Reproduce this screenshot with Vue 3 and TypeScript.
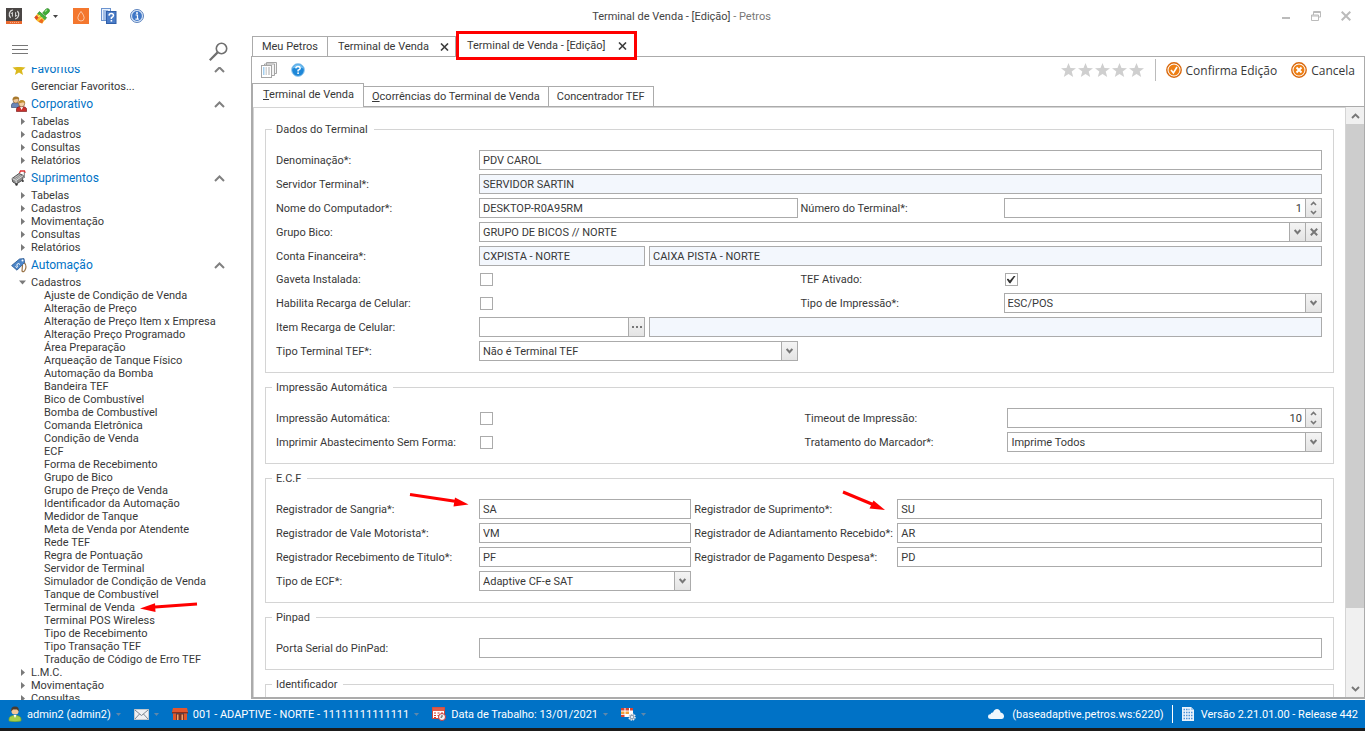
<script setup lang="ts">
import { reactive, ref } from 'vue'

interface TreeNode {
  label: string
  open?: boolean
  children?: string[]
}
interface TreeSection {
  title: string
  icon: 'star' | 'people' | 'cart' | 'tag'
  nodes: TreeNode[]
}

const sections: TreeSection[] = [
  { title: 'Favoritos', icon: 'star', nodes: [] },
  {
    title: 'Corporativo',
    icon: 'people',
    nodes: [{ label: 'Tabelas' }, { label: 'Cadastros' }, { label: 'Consultas' }, { label: 'Relatórios' }],
  },
  {
    title: 'Suprimentos',
    icon: 'cart',
    nodes: [
      { label: 'Tabelas' },
      { label: 'Cadastros' },
      { label: 'Movimentação' },
      { label: 'Consultas' },
      { label: 'Relatórios' },
    ],
  },
  {
    title: 'Automação',
    icon: 'tag',
    nodes: [
      {
        label: 'Cadastros',
        open: true,
        children: [
          'Ajuste de Condição de Venda',
          'Alteração de Preço',
          'Alteração de Preço Item x Empresa',
          'Alteração Preço Programado',
          'Área Preparação',
          'Arqueação de Tanque Físico',
          'Automação da Bomba',
          'Bandeira TEF',
          'Bico de Combustível',
          'Bomba de Combustível',
          'Comanda Eletrônica',
          'Condição de Venda',
          'ECF',
          'Forma de Recebimento',
          'Grupo de Bico',
          'Grupo de Preço de Venda',
          'Identificador da Automação',
          'Medidor de Tanque',
          'Meta de Venda por Atendente',
          'Rede TEF',
          'Regra de Pontuação',
          'Servidor de Terminal',
          'Simulador de Condição de Venda',
          'Tanque de Combustível',
          'Terminal de Venda',
          'Terminal POS Wireless',
          'Tipo de Recebimento',
          'Tipo Transação TEF',
          'Tradução de Código de Erro TEF',
        ],
      },
      { label: 'L.M.C.' },
      { label: 'Movimentação' },
      { label: 'Consultas' },
    ],
  },
]

const current = ref('Terminal de Venda')

const form = reactive({
  denominacao: 'PDV CAROL',
  servidor: 'SERVIDOR SARTIN',
  computador: 'DESKTOP-R0A95RM',
  numero: 1,
  grupoBico: 'GRUPO DE BICOS // NORTE',
  contaCodigo: 'CXPISTA - NORTE',
  contaNome: 'CAIXA PISTA - NORTE',
  gaveta: false,
  tef: true,
  recarga: false,
  tipoImpressao: 'ESC/POS',
  itemCodigo: '',
  itemNome: '',
  tipoTef: 'Não é Terminal TEF',
  impressaoAuto: false,
  timeout: 10,
  semForma: false,
  marcador: 'Imprime Todos',
  sangria: 'SA',
  suprimento: 'SU',
  vale: 'VM',
  adiantamento: 'AR',
  titulo: 'PF',
  despesa: 'PD',
  tipoEcf: 'Adaptive CF-e SAT',
  porta: '',
})
</script>

<template>
  <div class="app">
    <header class="titlebar">
      <div class="quick">
        <svg class="logo" width="16" height="16" viewBox="0 0 16 16">
          <rect width="16" height="16" fill="#4a4645" />
          <path d="M6.8 1.8A4.8 4.8 0 0 0 4.6 9.8M9.2 11A4.8 4.8 0 0 0 11.4 3" fill="none" stroke="#dcdcdc" stroke-width="1.2" />
          <path d="M6.4 8.6V4.4L4.8 6M9.6 4.2v4.4L11.2 7" stroke="#dcdcdc" stroke-width="1" fill="none" />
          <rect y="13" width="16" height="3" fill="#e8692f" />
          <path d="M4 14.5h9" stroke="#f8b08c" stroke-dasharray="1 1" />
        </svg>
        <button class="brush" aria-label="Aparência">
          <svg width="16" height="16" viewBox="0 0 16 16">
            <path d="M8.6 5 11.8 1.2Q13.4-.2 15 1.2T14.8 4.4L11.2 7.6z" fill="#3fae35" stroke="#2b7d26" stroke-width=".6" />
            <path d="M11 3.6 13 1.6" stroke="#a5e39a" stroke-width="1.2" />
            <path d="M5.4 3.6 12.6 9.6 10.8 12 3.6 5.8z" fill="#46b53a" stroke="#2b7d26" stroke-width=".6" />
            <path d="M3.4 5.8 10.8 12 8.2 15.4Q3.4 14.6.4 9.4z" fill="#f7bd2e" />
            <path d="M.4 9.4 2.2 7.2 4.6 9.4 2.6 12z" fill="#dd4a2a" />
            <path d="M4.6 13.8 7.4 10.6 9.4 12.4 8.2 15.4z" fill="#ee6a20" />
            <path d="M4 8.6 6.2 7.4M6 11.4l2-2" stroke="#fff2a0" />
          </svg>
          <svg width="5" height="3" viewBox="0 0 5 3"><path d="M0 0h5L2.5 3z" fill="#444" /></svg>
        </button>
        <svg class="drop" width="16" height="16" viewBox="0 0 16 16">
          <rect width="16" height="16" fill="#f4772e" />
          <path d="M8 3.4Q4.8 7.6 4.8 9.8a3.2 3.2 0 0 0 6.4 0Q11.2 7.6 8 3.4z" fill="none" stroke="#fbc7a6" stroke-width="1" />
        </svg>
        <svg class="docs" width="16" height="16" viewBox="0 0 16 16">
          <rect x=".5" y=".5" width="9" height="12" fill="#e8f1fc" stroke="#6b93cf" />
          <path d="M2 3h5M2 5h3M2 7h3M2 9h3M2 11h3" stroke="#5d8ad0" />
          <rect x="5.5" y="3.5" width="9.5" height="12" fill="#4a7cc8" stroke="#2f5ea8" />
          <path d="M8 7.6Q8.2 5.6 10.3 5.6T12.5 7.5Q12.5 8.7 10.4 9.7V11" fill="none" stroke="#fff" stroke-width="1.5" />
          <rect x="9.6" y="12" width="1.6" height="1.6" fill="#fff" />
        </svg>
        <svg width="14" height="14" viewBox="0 0 14 14">
          <circle cx="7" cy="7" r="6.5" fill="#dbe8f8" stroke="#5c82bd" />
          <circle cx="7" cy="7" r="4.9" fill="#3f76c6" />
          <path d="M5.6 6h1.9v4M5.4 10.2h3.4" stroke="#fff" fill="none" stroke-width="1.2" />
          <circle cx="7" cy="3.9" r="1" fill="#fff" />
        </svg>
      </div>
      <h1 class="caption">Terminal de Venda - [Edição] <span>- Petros</span></h1>
      <div class="window-buttons">
        <button aria-label="Minimizar"><svg width="10" height="10" viewBox="0 0 10 10"><path d="M1 7h8" stroke="#bbb" stroke-width="2" /></svg></button>
        <button aria-label="Restaurar"><svg width="10" height="10" viewBox="0 0 10 10"><path d="M2.5 4V.5h7V6H8M2 1.5h7.5M.5 4h7v5.5h-7zM.5 5h7" fill="none" stroke="#bbb" /></svg></button>
        <button aria-label="Fechar"><svg width="10" height="10" viewBox="0 0 10 10"><path d="M.7.7l8.6 8.6M9.3.7.7 9.3" stroke="#bbb" stroke-width="2" /></svg></button>
      </div>
    </header>

    <div class="main">
      <aside class="sidebar">
        <div class="side-tools">
          <button class="menu" aria-label="Menu"><svg width="16" height="9" viewBox="0 0 16 9"><path d="M0 .5h16M0 4.5h16M0 8.5h16" stroke="#777" /></svg></button>
          <button aria-label="Pesquisar">
            <svg width="19" height="19" viewBox="0 0 19 19"><circle cx="12.5" cy="6.5" r="5.2" fill="none" stroke="#6f6f6f" stroke-width="1.6" /><path d="M8.6 10.4.8 18.2" stroke="#6f6f6f" stroke-width="2.2" /></svg>
          </button>
        </div>
        <nav class="tree">
          <div class="tree-body">
            <section v-for="s in sections" :key="s.title">
              <h2>
                <span class="sec-icon">
                  <svg v-if="s.icon === 'star'" width="14" height="14" viewBox="0 0 14 14"><path d="M7 .5 8.8 5.1 13.5 5.4 9.9 8.4 11.1 13 7 10.4 2.9 13 4.1 8.4.5 5.4 5.2 5.1z" fill="#dbb91e" /></svg>
                  <svg v-else-if="s.icon === 'people'" width="16" height="16" viewBox="0 0 16 16">
                    <path d="M.5 11.500V9Q.5 6.500 4.500 6.500T9 9v2.500z" fill="#6b87b8" stroke="#3c4f78" stroke-width=".7" />
                    <circle cx="4.800" cy="4.200" r="2.800" fill="#f0c79a" stroke="#7a5326" stroke-width=".6" />
                    <path d="M1.600 4Q1.300.5 4.900.5T8.200 3.800L6.500 2.800z" fill="#a8792c" />
                    <path d="M5.500 15.600V13.200Q5.700 10.500 10.500 10.500T15.600 13.200v2.400z" fill="#c9302c" stroke="#7d1a1a" stroke-width=".7" />
                    <path d="M9 10.700l1.600 3.300 1.600-3.300z" fill="#fff" />
                    <circle cx="10.700" cy="7.800" r="3" fill="#f3cda4" stroke="#7a5326" stroke-width=".6" />
                    <path d="M7.300 7.600Q7.200 4 10.800 4T14.200 7.500L12.400 6.200z" fill="#bf8c30" />
                  </svg>
                  <svg v-else-if="s.icon === 'cart'" width="16" height="16" viewBox="0 0 16 16">
                    <path d="M1 8.500 8 3.500 12.500 5.500 11.500 10 5.500 14 1.800 12z" fill="#8d8d8d" stroke="#555" />
                    <path d="M1.500 8.700 5 10.500 12.300 5.600M5 10.500l.5 3" stroke="#d8d8d8" fill="none" />
                    <path d="M3.500 7.800l5-3.300M4 9.500l6-4" stroke="#bcbcbc" />
                    <path d="M8.500 3 9.500 1h4l.6 2" fill="none" stroke="#d33" stroke-width="1.300" />
                    <path d="M13.300 2v6" stroke="#777" />
                    <circle cx="5.500" cy="14.500" r="1.200" fill="#333" /><circle cx="11.800" cy="11" r="1.100" fill="#333" />
                  </svg>
                  <svg v-else width="16" height="16" viewBox="0 0 16 16">
                    <path d="M12.500 5Q16 8 14.500 12T11 14L11.500 8" fill="none" stroke="#9a7448" stroke-width="1.200" />
                    <path d="M.6 8.600 8.500 2 13 1.600 13.600 5.500 6 13.200z" fill="#4c86c8" stroke="#28568f" stroke-width=".8" />
                    <circle cx="11.500" cy="3.600" r="1" fill="#fff" />
                    <path d="M4.500 9.500l1.500 1Q7 9.500 6 8.500T7.500 6.500l1.500 1" fill="none" stroke="#fff" />
                  </svg>
                </span>
                <button class="sec-title">
                  {{ s.title }}
                  <svg width="11" height="7" viewBox="0 0 11 7"><path d="M1 6 5.5 1.5 10 6" fill="none" stroke="#808080" stroke-width="2" /></svg>
                </button>
              </h2>
              <ul>
                <li v-if="s.icon === 'star'"><a class="node" href="#">Gerenciar Favoritos...</a></li>
                <li v-for="n in s.nodes" :key="n.label">
                  <a class="node" href="#">
                    <svg v-if="n.open" class="twist" width="8" height="7" viewBox="0 0 8 7"><path d="M0 1.5h7L3.5 5.5z" fill="#7a7a7a" /></svg>
                    <svg v-else class="twist" width="8" height="7" viewBox="0 0 8 7"><path d="M2 0v7L6 3.5z" fill="#7a7a7a" /></svg>
                    {{ n.label }}
                  </a>
                  <ul v-if="n.children">
                    <li v-for="c in n.children" :key="c">
                      <a class="leaf" href="#">{{ c }}
                        <svg v-if="c === current" class="arrow" width="58" height="12" viewBox="0 0 58 12"><path d="M57 2 15 4.9" stroke="#f00" stroke-width="3" /><path d="M0 6.5 15 1.2 15.5 10z" fill="#f00" /></svg>
                      </a>
                    </li>
                  </ul>
                </li>
              </ul>
            </section>
          </div>
        </nav>
      </aside>

      <main class="workspace">
        <div class="doc-tabs">
          <div class="doc-tab"><button>Meu Petros</button></div>
          <div class="doc-tab closable">
            <button>Terminal de Venda</button>
            <button aria-label="Fechar aba"><svg width="9" height="8" viewBox="0 0 9 8"><path d="M1 .5 8 7.5M8 .5 1 7.5" stroke="#3c3c3c" stroke-width="1.6" /></svg></button>
          </div>
          <div class="doc-tab closable active">
            <button>Terminal de Venda - [Edição]</button>
            <button aria-label="Fechar aba"><svg width="9" height="8" viewBox="0 0 9 8"><path d="M1 .5 8 7.5M8 .5 1 7.5" stroke="#3c3c3c" stroke-width="1.6" /></svg></button>
          </div>
        </div>

        <div class="document">
          <div class="toolbar">
            <button aria-label="Registros">
              <svg width="16" height="16" viewBox="0 0 16 16">
                <path d="M5.500 3V.5h10v11H13M3.500 4.500V2h10v11.500H11" fill="#f4f4f4" stroke="#a5a5a5" />
                <rect x=".5" y="3.500" width="10" height="12" fill="#fff" stroke="#a5a5a5" />
                <path d="M2 6h1.500M2 8h1.500M2 10h1.500M2 12h1.500" stroke="#4aa0e0" />
                <path d="M4.500 6H6M4.500 8H6M4.500 10H6M4.500 12H6M7 6h2M7 8h2M7 10h2M7 12h2" stroke="#a8a8a8" />
              </svg>
            </button>
            <button aria-label="Ajuda">
              <svg width="14" height="14" viewBox="0 0 14 14">
                <circle cx="7" cy="7" r="6.4" fill="#1d87d8" stroke="#9cccf0" />
                <path d="M1.5 5.500Q3 1.300 7 1.300T12.500 5.500Q7 3.500 1.500 5.500z" fill="#6fbdf0" />
                <path d="M4.800 5.400Q5 3.500 7 3.500T9.200 5.200Q9.200 6.300 7.100 7.200V8.400" fill="none" stroke="#fff" stroke-width="1.5" />
                <rect x="6.300" y="9.400" width="1.600" height="1.600" fill="#fff" />
              </svg>
            </button>
            <div class="rating">
              <svg v-for="i in 5" :key="i" width="15" height="14" viewBox="0 0 15 14"><path d="M7.5 0 9.5 5 15 5.2 10.7 8.5 12.2 14 7.5 10.9 2.8 14 4.3 8.5 0 5.2 5.5 5z" fill="#cfcfcf" /></svg>
            </div>
            <button class="command">
              <svg width="16" height="16" viewBox="0 0 16 16"><circle cx="8" cy="8" r="7.2" fill="#fff" stroke="#d9690e" stroke-width="1.4" /><circle cx="8" cy="8" r="5.5" fill="#ee7f14" /><path d="M5 8l2.4 2.8L11 5" fill="none" stroke="#fff" stroke-width="1.6" /></svg>
              Confirma Edição
            </button>
            <button class="command">
              <svg width="16" height="16" viewBox="0 0 16 16"><circle cx="8" cy="8" r="7.2" fill="#fff" stroke="#d9690e" stroke-width="1.4" /><circle cx="8" cy="8" r="5.5" fill="#ee7f14" /><path d="M5.500 5.500l5 5M10.500 5.500l-5 5" stroke="#fff" stroke-width="2" /></svg>
              Cancela
            </button>
          </div>

          <div class="page-tabs">
            <button class="page-tab active"><u>T</u>erminal de Venda</button>
            <button class="page-tab"><u>O</u>corrências do Terminal de Venda</button>
            <button class="page-tab">Concentrador TEF</button>
          </div>

          <div class="page">
            <form class="groups" @submit.prevent>
              <fieldset>
                <legend>Dados do Terminal</legend>
                <div class="grid halves">
                  <label for="den">Denominação*:</label>
                  <input id="den" v-model="form.denominacao" class="box wide" />
                  <label for="srv">Servidor Terminal*:</label>
                  <input id="srv" v-model="form.servidor" class="box wide" readonly />
                  <label for="cmp">Nome do Computador*:</label>
                  <input id="cmp" v-model="form.computador" class="box" />
                  <label for="num" class="second">Número do Terminal*:</label>
                  <div class="combo">
                    <input id="num" v-model="form.numero" type="number" />
                    <span class="spin">
                      <button type="button" aria-label="Aumentar"><svg width="7" height="5" viewBox="0 0 7 5"><path d="M1 4 3.5 1.5 6 4" fill="none" stroke="#777" stroke-width="1.6" /></svg></button>
                      <button type="button" aria-label="Diminuir"><svg width="7" height="5" viewBox="0 0 7 5"><path d="M1 1l2.5 2.5L6 1" fill="none" stroke="#777" stroke-width="1.6" /></svg></button>
                    </span>
                  </div>
                  <label for="gru">Grupo Bico:</label>
                  <div class="combo wide">
                    <select id="gru" v-model="form.grupoBico"><option>GRUPO DE BICOS // NORTE</option></select>
                    <button type="button" class="drop-btn" aria-label="Abrir"><svg width="7" height="6" viewBox="0 0 7 6"><path d="M.7 1 3.5 4.2 6.3 1" fill="none" stroke="#777" stroke-width="1.9" /></svg></button>
                    <button type="button" class="drop-btn" aria-label="Limpar"><svg width="8" height="8" viewBox="0 0 8 8"><path d="M.8.8l6.4 6.4M7.2.8.8 7.2" stroke="#777" stroke-width="2" /></svg></button>
                  </div>
                  <label for="con">Conta Financeira*:</label>
                  <div class="pair wide">
                    <input id="con" v-model="form.contaCodigo" class="box" readonly />
                    <input v-model="form.contaNome" class="box" aria-label="Nome da conta" readonly />
                  </div>
                  <label for="gav" class="low">Gaveta Instalada:</label>
                  <input id="gav" v-model="form.gaveta" type="checkbox" />
                  <label for="tef" class="second low">TEF Ativado:</label>
                  <input id="tef" v-model="form.tef" type="checkbox" />
                  <label for="rec">Habilita Recarga de Celular:</label>
                  <input id="rec" v-model="form.recarga" type="checkbox" />
                  <label for="imp" class="second">Tipo de Impressão*:</label>
                  <div class="combo">
                    <select id="imp" v-model="form.tipoImpressao"><option>ESC/POS</option></select>
                    <button type="button" class="drop-btn" aria-label="Abrir"><svg width="7" height="6" viewBox="0 0 7 6"><path d="M.7 1 3.5 4.2 6.3 1" fill="none" stroke="#777" stroke-width="1.9" /></svg></button>
                  </div>
                  <label for="ite">Item Recarga de Celular:</label>
                  <div class="pair wide">
                    <div class="combo">
                      <input id="ite" v-model="form.itemCodigo" type="text" />
                      <button type="button" class="drop-btn" aria-label="Procurar"><svg width="10" height="2" viewBox="0 0 10 2"><path d="M0 0h2v2H0zM4 0h2v2H4zM8 0h2v2H8z" fill="#777" /></svg></button>
                    </div>
                    <input v-model="form.itemNome" class="box" aria-label="Nome do item" readonly />
                  </div>
                  <label for="tte">Tipo Terminal TEF*:</label>
                  <div class="combo">
                    <select id="tte" v-model="form.tipoTef"><option>Não é Terminal TEF</option></select>
                    <button type="button" class="drop-btn" aria-label="Abrir"><svg width="7" height="6" viewBox="0 0 7 6"><path d="M.7 1 3.5 4.2 6.3 1" fill="none" stroke="#777" stroke-width="1.9" /></svg></button>
                  </div>
                </div>
              </fieldset>

              <fieldset>
                <legend>Impressão Automática</legend>
                <div class="grid print">
                  <label for="aut">Impressão Automática:</label>
                  <input id="aut" v-model="form.impressaoAuto" type="checkbox" />
                  <label for="tim" class="second">Timeout de Impressão:</label>
                  <div class="combo">
                    <input id="tim" v-model="form.timeout" type="number" />
                    <span class="spin">
                      <button type="button" aria-label="Aumentar"><svg width="7" height="5" viewBox="0 0 7 5"><path d="M1 4 3.5 1.5 6 4" fill="none" stroke="#777" stroke-width="1.6" /></svg></button>
                      <button type="button" aria-label="Diminuir"><svg width="7" height="5" viewBox="0 0 7 5"><path d="M1 1l2.5 2.5L6 1" fill="none" stroke="#777" stroke-width="1.6" /></svg></button>
                    </span>
                  </div>
                  <label for="sem">Imprimir Abastecimento Sem Forma:</label>
                  <input id="sem" v-model="form.semForma" type="checkbox" />
                  <label for="mar" class="second">Tratamento do Marcador*:</label>
                  <div class="combo">
                    <select id="mar" v-model="form.marcador"><option>Imprime Todos</option></select>
                    <button type="button" class="drop-btn" aria-label="Abrir"><svg width="7" height="6" viewBox="0 0 7 6"><path d="M.7 1 3.5 4.2 6.3 1" fill="none" stroke="#777" stroke-width="1.9" /></svg></button>
                  </div>
                </div>
              </fieldset>

              <fieldset>
                <legend>E.C.F</legend>
                <div class="grid thirds">
                  <label for="san">Registrador de Sangria*:
                    <svg class="arrow" width="60" height="16" viewBox="0 0 60 16"><path d="M1 2.5 46 9.2" stroke="#f00" stroke-width="3" /><path d="M59.5 12.5 46 5.5 44.5 14.5z" fill="#f00" /></svg>
                  </label>
                  <input id="san" v-model="form.sangria" class="box" />
                  <label for="sup" class="second">Registrador de Suprimento*:
                    <svg class="arrow steep" width="44" height="22" viewBox="0 0 44 22"><path d="M1 2 31 14.5" stroke="#f00" stroke-width="3" /><path d="M43 20 31.5 10.5 27.5 18.5z" fill="#f00" /></svg>
                  </label>
                  <input id="sup" v-model="form.suprimento" class="box" />
                  <label for="val">Registrador de Vale Motorista*:</label>
                  <input id="val" v-model="form.vale" class="box" />
                  <label for="adi" class="second">Registrador de Adiantamento Recebido*:</label>
                  <input id="adi" v-model="form.adiantamento" class="box" />
                  <label for="tit">Registrador Recebimento de Titulo*:</label>
                  <input id="tit" v-model="form.titulo" class="box" />
                  <label for="pag" class="second">Registrador de Pagamento Despesa*:</label>
                  <input id="pag" v-model="form.despesa" class="box" />
                  <label for="ecf">Tipo de ECF*:</label>
                  <div class="combo">
                    <select id="ecf" v-model="form.tipoEcf"><option>Adaptive CF-e SAT</option></select>
                    <button type="button" class="drop-btn" aria-label="Abrir"><svg width="7" height="6" viewBox="0 0 7 6"><path d="M.7 1 3.5 4.2 6.3 1" fill="none" stroke="#777" stroke-width="1.9" /></svg></button>
                  </div>
                </div>
              </fieldset>

              <fieldset>
                <legend>Pinpad</legend>
                <div class="grid halves">
                  <label for="por">Porta Serial do PinPad:</label>
                  <input id="por" v-model="form.porta" class="box wide" />
                </div>
              </fieldset>

              <fieldset>
                <legend>Identificador</legend>
                <div class="grid halves"></div>
              </fieldset>
            </form>
            <div class="scrollbar">
              <button aria-label="Rolar para cima"><svg width="9" height="6" viewBox="0 0 9 6"><path d="M1 5 4.5 1.5 8 5" fill="none" stroke="#777" stroke-width="1.9" /></svg></button>
              <span class="track"><span class="thumb"></span></span>
              <button aria-label="Rolar para baixo"><svg width="9" height="6" viewBox="0 0 9 6"><path d="M1 1l3.5 3.5L8 1" fill="none" stroke="#777" stroke-width="1.9" /></svg></button>
            </div>
          </div>
        </div>
      </main>
    </div>

    <footer class="status">
      <button class="cell user">
        <svg width="14" height="16" viewBox="0 0 14 16"><path d="M1 15v-2Q1 9.5 7 9.5T13 13v2Q7 16.5 1 15z" fill="#a5cf4a" stroke="#6fa02c" stroke-width=".7" /><circle cx="7" cy="5" r="3.6" fill="#f1c79b" /><path d="M3.2 5.5Q2.6.5 7 .5T10.8 5.5L9 3.5H5z" fill="#4a3a2c" /><path d="M5.500 9h3L7 12z" fill="#fff" /></svg>
        admin2 (admin2)
        <svg width="5" height="3" viewBox="0 0 5 3"><path d="M0 0h5L2.5 3z" fill="#5f88ab" /></svg>
      </button>
      <button class="cell mail" aria-label="Mensagens">
        <svg width="15" height="11" viewBox="0 0 15 11"><rect x=".5" y=".5" width="14" height="10" fill="#eef0f2" stroke="#c3c9cf" /><path d="M.7.8 7.500 6.500 14.300.8M.8 10.200 5.500 5M14.200 10.200 9.500 5" fill="none" stroke="#6f7c88" stroke-width=".9" /></svg>
        <svg width="5" height="3" viewBox="0 0 5 3"><path d="M0 0h5L2.5 3z" fill="#5f88ab" /></svg>
      </button>
      <button class="cell company">
        <svg width="16" height="12" viewBox="0 0 16 12"><path d="M1 0h14l1 4H0z" fill="#e4572e" /><path d="M0 4h16v1.500H0z" fill="#8f2e1c" /><path d="M1 5.500h3V12H1zM12 5.500h3V12h-3z" fill="#e0562c" /><path d="M4 5.500h8V12H4z" fill="#7b3524" /><path d="M5 6.500h1.500V12H5zM9.500 6.500H11V12H9.500z" fill="#f0a070" /></svg>
        001 - ADAPTIVE - NORTE - 11111111111111
        <svg width="5" height="3" viewBox="0 0 5 3"><path d="M0 0h5L2.5 3z" fill="#5f88ab" /></svg>
      </button>
      <button class="cell date">
        <svg width="14" height="14" viewBox="0 0 14 14"><rect x=".5" y=".5" width="12" height="11" fill="#fff" stroke="#c94a3c" /><path d="M.5.5h12v3.500H.5z" fill="#df5a49" /><path d="M2 6h2M5.500 6h2M9 6h2M2 8.500h2M5.500 8.500h2M2 10.500h2" stroke="#d0392b" stroke-width="1.200" /><circle cx="10" cy="10" r="3.500" fill="#f4f4f4" stroke="#c33" /><path d="M10 8v2.200H8.500" fill="none" stroke="#555" /></svg>
        Data de Trabalho: 13/01/2021
        <svg width="5" height="3" viewBox="0 0 5 3"><path d="M0 0h5L2.5 3z" fill="#5f88ab" /></svg>
      </button>
      <button class="cell" aria-label="Configurações">
        <svg width="15" height="13" viewBox="0 0 15 13"><rect width="12" height="9" fill="#fff" /><path d="M0 0h3.500v2.500H0zM4.500 0H8v2.500H4.500zM9 0h3v2.500H9z" fill="#d9432f" /><path d="M0 3.500h3.500V6H0zM4.500 3.500H8V6H4.500z" fill="#f0a03c" /><path d="M0 6.800h3.500V9H0z" fill="#d9432f" /><circle cx="11" cy="9" r="3" fill="#8fa2b5" stroke="#e8edf2" stroke-width="1.500" stroke-dasharray="1.500 .8" /><circle cx="11" cy="9" r="1.100" fill="#fff" /></svg>
        <svg width="5" height="3" viewBox="0 0 5 3"><path d="M0 0h5L2.5 3z" fill="#5f88ab" /></svg>
      </button>
      <span class="cell right">
        <svg width="16" height="10" viewBox="0 0 16 10"><path d="M3 10Q0 10 0 7.500T2.500 5.200Q3 3 5 3.500 6.200 0 9 0t3.600 3.500Q15.800 4 16 7T13.500 10z" fill="#eef6fd" /></svg>
        (baseadaptive.petros.ws:6220)
      </span>
      <span class="cell version">
        <svg width="12" height="14" viewBox="0 0 12 14"><path d="M0 0h9l3 3v11H0z" fill="#eaf3fc" /><path d="M9 0v3h3" fill="#a8c9ea" /><path d="M1.500 2.500h6M1.500 5.500h9M1.500 8.500h9M1.500 11.500h9" stroke="#4d93d6" stroke-width="1.600" stroke-dasharray="1.500 1" /></svg>
        Versão 2.21.01.00 - Release 442
      </span>
    </footer>
  </div>
</template>

<style>
body {
  margin: 0;
  background: #fff;
}
</style>

<style scoped>
.app {
  display: flex;
  flex-direction: column;
  height: 100vh;
  overflow: hidden;
  box-sizing: border-box;
  border-bottom: 3px solid #1b1b1b;
  font-family: Roboto, 'Noto Sans', sans-serif;
  font-size: 11px;
  line-height: 13px;
  color: #383838;
  background: #fff;
}
.app *,
.app *::before {
  box-sizing: border-box;
}
button,
input,
select {
  font: inherit;
  color: inherit;
  margin: 0;
  padding: 0;
  border: 0;
  border-radius: 0;
  background: none;
}
svg {
  display: block;
  flex: none;
}
a {
  color: inherit;
  text-decoration: none;
}
ul {
  list-style: none;
  margin: 0;
  padding: 0;
}

.titlebar {
  display: grid;
  grid-template-columns: 1fr auto 1fr;
  align-items: center;
  height: 32px;
  flex: none;
  padding: 0 8px 0 6px;
}
.quick {
  display: flex;
  align-items: center;
}
.brush {
  display: flex;
  align-items: center;
  gap: 3px;
  margin: 0 15px 0 12px;
}
.docs {
  margin: 0 13px 0 12px;
}
.caption {
  margin: 0;
  font-size: 11px;
  font-weight: 400;
  color: #444;
}
.caption span {
  color: #777;
}
.window-buttons {
  display: flex;
  justify-content: flex-end;
  gap: 20px;
  padding-right: 6px;
}

.main {
  display: flex;
  flex: 1;
  min-height: 0;
}
.sidebar {
  display: flex;
  flex-direction: column;
  width: 251px;
  flex: none;
}
.side-tools {
  display: flex;
  justify-content: space-between;
  align-items: center;
  height: 35px;
  flex: none;
  padding: 4px 23px 0 12px;
}
.menu {
  padding-bottom: 4px;
}
.tree {
  flex: 1;
  overflow: hidden;
  min-height: 0;
}
.tree-body {
  margin-top: -9px;
}
h2 {
  display: flex;
  align-items: center;
  height: 22px;
  margin: 0;
  font-size: 12px;
  font-weight: 400;
}
.sec-icon {
  display: flex;
  justify-content: center;
  width: 16px;
  margin: 0 4px 0 11px;
}
.sec-title {
  display: flex;
  flex: 1;
  align-items: center;
  justify-content: space-between;
  padding-right: 26px;
  color: #0072c6;
}
.node,
.leaf {
  position: relative;
  display: flex;
  align-items: center;
  height: 13px;
  padding-left: 31px;
  white-space: nowrap;
}
.leaf {
  padding-left: 44px;
}
.twist {
  position: absolute;
  left: 19px;
}
.leaf .arrow {
  position: absolute;
  left: 140px;
  top: 1px;
}

.workspace {
  display: flex;
  flex-direction: column;
  flex: 1;
  min-width: 0;
  padding-bottom: 1px;
}
.doc-tabs {
  display: flex;
  height: 24px;
  flex: none;
  padding: 4px 0 0 1px;
}
.doc-tab {
  display: flex;
  align-items: center;
  justify-content: center;
  width: 76px;
  border: 1px solid #ababab;
  border-bottom: 0;
}
.doc-tab + .doc-tab {
  border-left: 0;
}
.closable {
  justify-content: space-between;
  width: 128px;
  padding: 0 6px 0 10px;
}
.closable.active {
  position: relative;
  width: 181px;
  height: 29px;
  margin-top: -5px;
  padding: 0 7px 0 8px;
  border: 3px solid #f00;
  background: #fff;
  z-index: 1;
}
.doc-tab + .closable.active {
  border-left: 3px solid #f00;
}
.document {
  display: flex;
  flex-direction: column;
  flex: 1;
  min-height: 0;
  border: 1px solid #ababab;
  border-bottom-width: 2px;
}
.toolbar {
  display: flex;
  align-items: center;
  height: 26px;
  flex: none;
  padding: 0 9px;
}
.toolbar > button + button {
  margin-left: 14px;
}
.rating {
  display: flex;
  gap: 2px;
  margin-left: auto;
  padding-right: 11px;
  border-right: 1px solid #bbb;
  height: 22px;
  align-items: center;
}
.command {
  display: flex;
  align-items: center;
  gap: 4px;
  font-family: 'Open Sans', 'Noto Sans', sans-serif;
  font-size: 12px;
}
.rating + .command {
  margin-left: 10px;
}

.page-tabs {
  display: flex;
  align-items: flex-end;
  height: 23px;
  flex: none;
}
.page-tab {
  height: 20px;
  padding: 0 8px;
  border: 1px solid #ababab;
  border-bottom: 0;
}
.page-tab + .page-tab {
  border-left: 0;
}
.page-tab.active {
  height: 24px;
  margin-bottom: -1px;
  padding: 0 9px 2px 10px;
  background: #fff;
  position: relative;
}
.page {
  display: flex;
  flex: 1;
  min-height: 0;
  border-top: 1px solid #ababab;
  border-left: 1px solid #ababab;
}
.groups {
  display: flex;
  flex-direction: column;
  gap: 7px;
  flex: 1;
  min-width: 0;
  overflow: hidden;
  padding: 14px 11px 0;
  border-top: 1px solid #d4d4d4;
  border-left: 1px solid #d4d4d4;
}
fieldset {
  min-width: 0;
  flex: none;
  margin: 0;
  padding: 13px 11px 11px 10px;
  border: 1px solid #d4d4d4;
}
legend {
  height: 15px;
  margin-left: -4px;
  padding: 0 6px 0 4px;
  line-height: 15px;
}
.grid {
  display: grid;
  align-items: center;
  row-gap: 4px;
  min-height: 20px;
}
.halves {
  grid-template-columns: 203px 1fr 206px 1fr;
}
.print {
  grid-template-columns: 203px 323fr 206px 315fr;
}
.thirds {
  grid-template-columns: 203px 1fr 206px 2fr;
}
.grid > label {
  display: flex;
  position: relative;
  align-items: center;
  grid-column: 1;
  height: 20px;
  white-space: nowrap;
}
.grid > label.low {
  height: 19px;
}
.grid > label.second {
  grid-column: 3;
  padding-left: 3px;
}
.wide {
  grid-column: 2 / 5;
}
.grid .arrow {
  position: absolute;
  left: 133px;
  top: -7px;
}
.grid .steep {
  left: 151px;
  top: -9px;
}
.box,
.combo {
  width: 100%;
  min-width: 0;
  height: 20px;
  border: 1px solid #ababab;
  background: #fff;
}
.box {
  padding: 0 3px;
}
.box[readonly] {
  background: #f3f7fd;
}
.combo {
  display: flex;
}
.combo input,
.combo select {
  flex: 1;
  width: 0;
  min-width: 0;
  padding: 0 3px;
  appearance: none;
}
.combo input[type='number'] {
  appearance: textfield;
  text-align: right;
}
.combo input[type='number']::-webkit-inner-spin-button {
  display: none;
}
.drop-btn,
.spin {
  display: flex;
  align-items: center;
  justify-content: center;
  width: 16px;
  flex: none;
  border-left: 1px solid #ababab;
  background: linear-gradient(#f4f4f4, #e4e4e4);
}
.spin {
  flex-direction: column;
}
.spin button {
  display: flex;
  flex: 1;
  width: 100%;
  align-items: center;
  justify-content: center;
}
.pair {
  display: grid;
  grid-template-columns: 166fr 673fr;
  gap: 4px;
}
input[type='checkbox'] {
  appearance: none;
  display: grid;
  place-items: center;
  width: 13px;
  height: 13px;
  margin-left: 1px;
  border: 1px solid #ababab;
  background: #fff;
}
input[type='checkbox']:checked::before {
  content: '';
  width: 9px;
  height: 8px;
  background: #333;
  clip-path: polygon(0 45%, 20% 40%, 38% 62%, 85% 0, 100% 5%, 42% 100%, 30% 95%);
}
.scrollbar {
  display: flex;
  flex-direction: column;
  width: 19px;
  flex: none;
  border-left: 1px solid #d4d4d4;
  background: #f0f0f0;
}
.scrollbar button {
  display: grid;
  place-items: center;
  height: 17px;
}
.track {
  flex: 1;
}
.thumb {
  display: block;
  height: 87%;
  background: #cdcdcd;
}

.status {
  display: flex;
  align-items: center;
  height: 28px;
  flex: none;
  padding: 0 7px 0 8px;
  background: #0072c6;
  color: #fff;
}
.cell {
  display: flex;
  align-items: center;
  gap: 5px;
  white-space: nowrap;
  margin-right: 13px;
}
.right {
  margin-left: auto;
  margin-right: 8px;
  gap: 8px;
}
.version {
  height: 18px;
  margin-right: 0;
  padding-left: 9px;
  gap: 7px;
  border-left: 1px solid #fff;
}
</style>
